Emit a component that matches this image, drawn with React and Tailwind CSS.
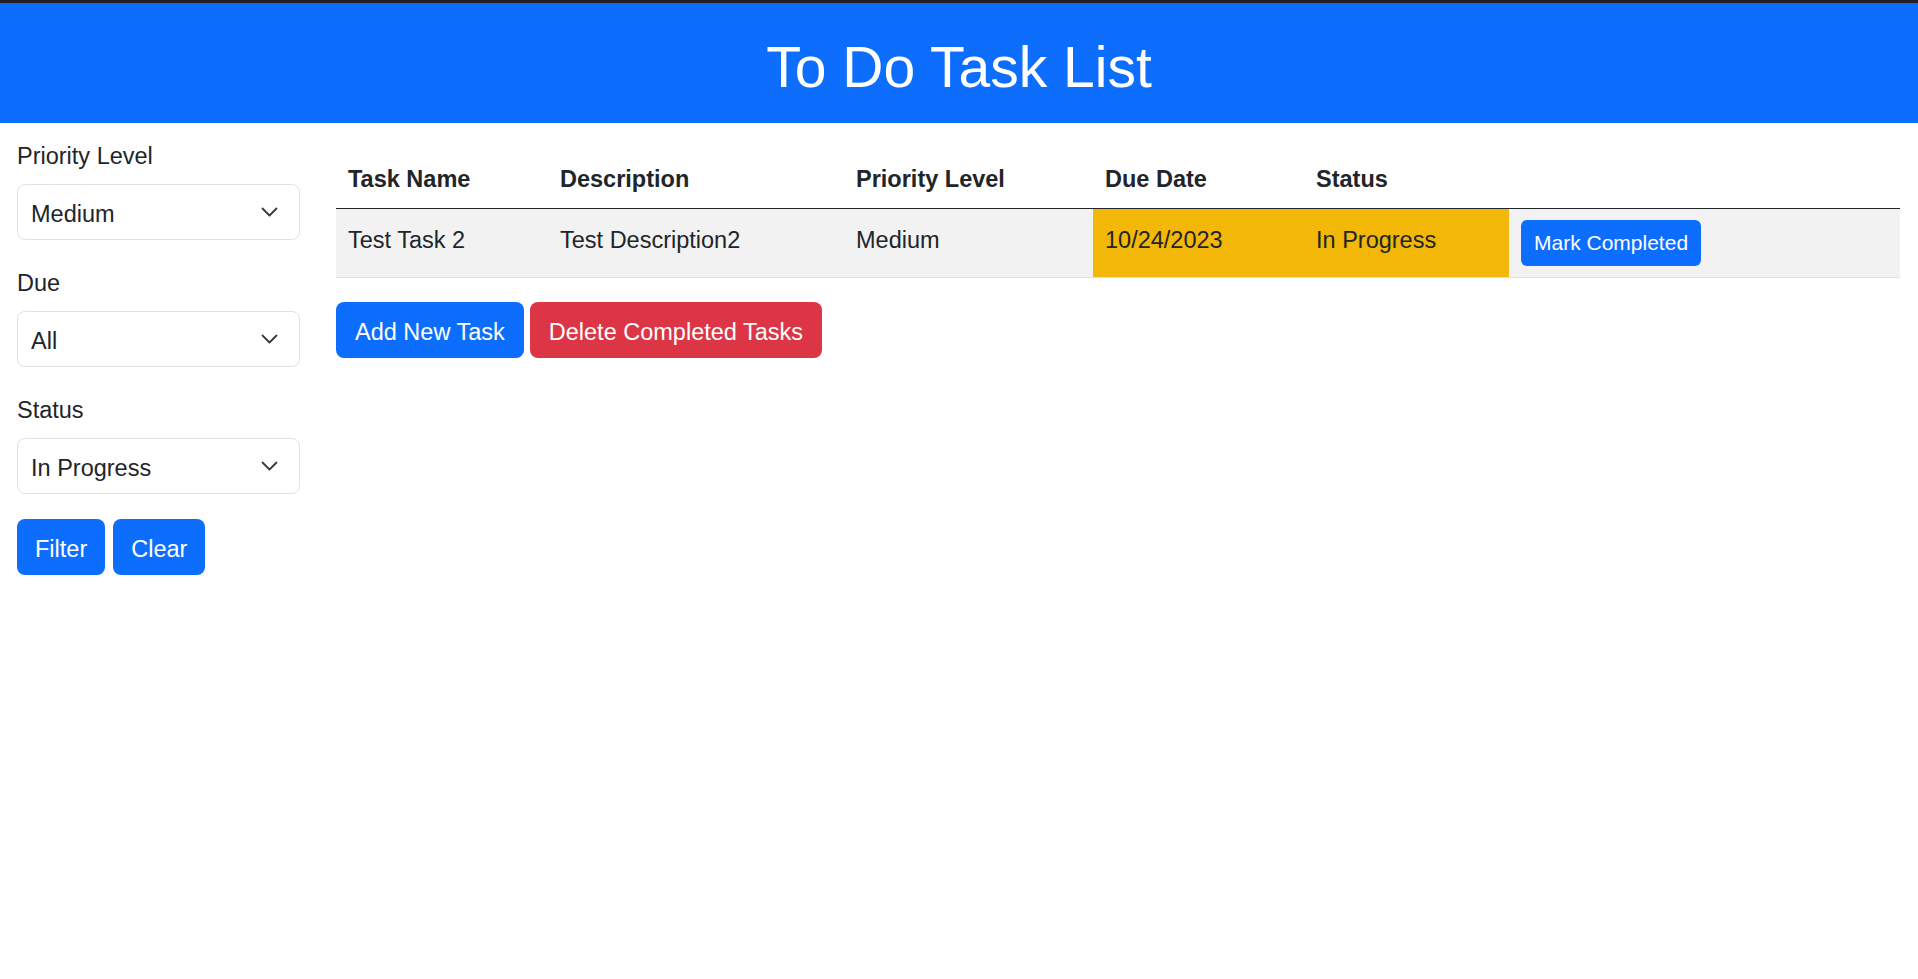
import { useState } from 'react';

const tasks = [
  {
    id: 2,
    name: 'Test Task 2',
    description: 'Test Description2',
    priority: 'Medium',
    dueDate: '10/24/2023',
    status: 'In Progress',
  },
];

function Chevron() {
  return (
    <svg
      className="pointer-events-none absolute right-[22px] top-1/2 -translate-y-1/2"
      width="17"
      height="10"
      viewBox="0 0 17 10"
      fill="none"
    >
      <path d="M1.5 1.5 8.5 8.5 15.5 1.5" stroke="#343a40" strokeWidth="1.8" strokeLinecap="round" strokeLinejoin="round" />
    </svg>
  );
}

function FilterSelect({ label, value, options, onChange }) {
  return (
    <div className="mb-[25px]">
      <label className="mb-[10px] block text-[23.5px] leading-[36px] text-[#212529]">{label}</label>
      <div className="relative">
        <select
          value={value}
          onChange={(e) => onChange(e.target.value)}
          className="h-[56px] w-full appearance-none rounded-[8px] border border-[#dee2e6] bg-white pl-[13px] pr-[50px] pt-[5px] text-[23.5px] text-[#212529] outline-none"
        >
          {options.map((opt) => (
            <option key={opt}>{opt}</option>
          ))}
        </select>
        <Chevron />
      </div>
    </div>
  );
}

export default function App() {
  const [priority, setPriority] = useState('Medium');
  const [due, setDue] = useState('All');
  const [status, setStatus] = useState('In Progress');

  return (
    <div className="min-h-screen bg-white font-['Liberation_Sans',Arial,sans-serif] text-[#212529]">
      <div className="h-[3px] bg-[#202124]" />
      <header className="h-[120px] bg-[#0d6efd] pt-[36px] text-center">
        <h1 className="text-[57px] leading-[57px] text-white">To Do Task List</h1>
      </header>

      <div className="flex">
        <aside className="w-[320px] shrink-0 pl-[17px] pr-[20px] pt-[15px]">
          <FilterSelect label="Priority Level" value={priority} options={['All', 'Low', 'Medium', 'High']} onChange={setPriority} />
          <FilterSelect label="Due" value={due} options={['All', 'Overdue', 'Due Today', 'Upcoming']} onChange={setDue} />
          <FilterSelect label="Status" value={status} options={['All', 'Not Started', 'In Progress', 'Completed']} onChange={setStatus} />
          <div className="flex gap-[8px]">
            <button className="h-[56px] rounded-[8px] bg-[#0d6efd] px-[18px] pt-[5px] text-[23.5px] text-white">Filter</button>
            <button className="h-[56px] rounded-[8px] bg-[#0d6efd] px-[18px] pt-[5px] text-[23.5px] text-white">Clear</button>
          </div>
        </aside>

        <main className="flex-1 pl-[16px] pr-[18px] pt-[25px]">
          <table className="w-full table-fixed border-collapse text-left text-[23.5px] leading-[36px]">
            <thead>
              <tr className="border-b border-[#212529]">
                <th className="w-[212px] px-[12px] pb-[11px] pt-[13px] font-bold">Task Name</th>
                <th className="w-[296px] px-[12px] pb-[11px] pt-[13px] font-bold">Description</th>
                <th className="w-[249px] px-[12px] pb-[11px] pt-[13px] font-bold">Priority Level</th>
                <th className="w-[211px] px-[12px] pb-[11px] pt-[13px] font-bold">Due Date</th>
                <th className="w-[205px] px-[12px] pb-[11px] pt-[13px] font-bold">Status</th>
                <th className="px-[12px] py-[12px]" />
              </tr>
            </thead>
            <tbody>
              {tasks.map((task) => (
                <tr key={task.id} className="border-b border-[#dee2e6] bg-[#f2f2f2]">
                  <td className="px-[12px] pb-[11px] pt-[13px] align-top">{task.name}</td>
                  <td className="px-[12px] pb-[11px] pt-[13px] align-top">{task.description}</td>
                  <td className="px-[12px] pb-[11px] pt-[13px] align-top">{task.priority}</td>
                  <td className="bg-[#f2b707] px-[12px] pb-[11px] pt-[13px] align-top">{task.dueDate}</td>
                  <td className="bg-[#f2b707] px-[12px] pb-[11px] pt-[13px] align-top">{task.status}</td>
                  <td className="px-[12px] py-[11px] align-top">
                    <button className="h-[46px] rounded-[6px] bg-[#0d6efd] px-[13px] text-[21px] leading-[46px] text-white">
                      Mark Completed
                    </button>
                  </td>
                </tr>
              ))}
            </tbody>
          </table>

          <div className="mt-[24px] flex gap-[6px]">
            <button className="h-[56px] rounded-[8px] bg-[#0d6efd] px-[19px] pt-[5px] text-[23.5px] text-white">Add New Task</button>
            <button className="h-[56px] rounded-[8px] bg-[#dc3545] px-[19px] pt-[5px] text-[23.5px] text-white">Delete Completed Tasks</button>
          </div>
        </main>
      </div>
    </div>
  );
}
